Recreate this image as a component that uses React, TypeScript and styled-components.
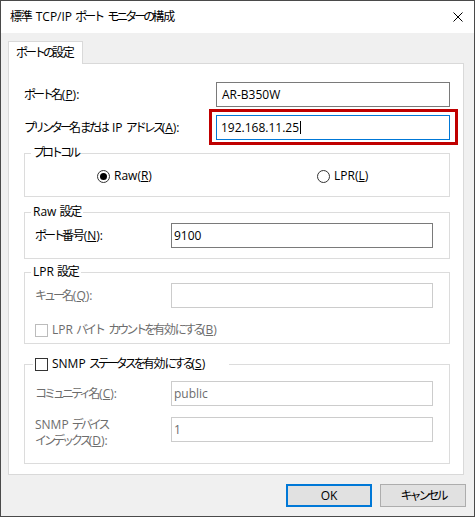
import React from "react";
import styled, { createGlobalStyle } from "styled-components";

const GlobalStyle = createGlobalStyle`
  html, body {
    margin: 0;
    padding: 0;
    background: #ffffff;
  }
  body {
    font-family: "Open Sans", "Noto Sans CJK JP", sans-serif;
    font-size: 12px;
    color: #000000;
  }
  * {
    box-sizing: border-box;
  }
`;

// The Windows UI font has narrow kana, so Japanese runs get tighter tracking
const KanaRun = styled.span<{ $spaced?: boolean }>`
  letter-spacing: -3px;
  margin-right: ${(p) => (p.$spaced ? 2 : 0)}px;
`;

const KanjiRun = styled.span<{ $spaced?: boolean }>`
  letter-spacing: -1.2px;
  margin-right: ${(p) => (p.$spaced ? 1 : 0)}px;
`;

const KANA = /[\u3040-\u30ff]/;
const KANJI = /[\u4e00-\u9fff]/;

const Jp = ({ text }: { text: string }) => {
  const parts = text.split(/([\u3040-\u30ff]+|[\u4e00-\u9fff]+)/).filter(Boolean);
  return (
    <>
      {parts.map((s, i) => {
        // keep the word space visible after a tightened run
        const spaced = (parts[i + 1] ?? "").startsWith(" ");
        if (KANA.test(s)) {
          return (
            <KanaRun key={i} $spaced={spaced}>
              {s}
            </KanaRun>
          );
        }
        if (KANJI.test(s)) {
          return (
            <KanjiRun key={i} $spaced={spaced}>
              {s}
            </KanjiRun>
          );
        }
        return <React.Fragment key={i}>{s}</React.Fragment>;
      })}
    </>
  );
};

// label text with an underlined access key, e.g. ポート名(P):
const Caption = ({ text, accel, colon }: { text: string; accel?: string; colon?: boolean }) => (
  <>
    <Jp text={text} />
    {accel && (
      <>
        (<u>{accel}</u>)
      </>
    )}
    {colon && ":"}
  </>
);

const Window = styled.div`
  width: 475px;
  height: 517px;
  border: 1px solid #4a4a4a;
  display: flex;
  flex-direction: column;
  background: #f0f0f0;
`;

const TitleBar = styled.div`
  flex: none;
  height: 32px;
  background: #ffffff;
  display: flex;
  align-items: center;
  justify-content: space-between;
  padding: 0 11px 0 9px;
`;

const Title = styled.span`
  line-height: 16px;
  white-space: nowrap;
`;

const Body = styled.div`
  flex: 1;
  padding: 8px 8px 0 7px;
  display: flex;
  flex-direction: column;
`;

const TabStrip = styled.div`
  display: flex;
`;

const Tab = styled.div`
  position: relative;
  z-index: 1;
  min-width: 75px;
  height: 23px;
  margin-bottom: -1px;
  padding: 3px 7px 0 7px;
  line-height: 16px;
  white-space: nowrap;
  background: #ffffff;
  border: 1px solid #d9d9d9;
  border-bottom: none;
`;

const Panel = styled.div`
  width: 456px;
  height: 412px;
  background: #ffffff;
  border: 1px solid #d9d9d9;
  padding: 18px 13px 0 15px;
  display: flex;
  flex-direction: column;
`;

const FormRow = styled.div<{ $mt?: number }>`
  display: grid;
  grid-template-columns: 192px 234px;
  align-items: center;
  margin-top: ${(p) => p.$mt ?? 0}px;
`;

const Label = styled.span<{ $disabled?: boolean }>`
  line-height: 16px;
  white-space: nowrap;
  color: ${(p) => (p.$disabled ? "#6d6d6d" : "#000000")};
`;

const TwoLineLabel = styled(Label)`
  line-height: 16px;
`;

type BoxState = "normal" | "focused" | "disabled";

const boxBorder: Record<BoxState, string> = {
  normal: "#7a7a7a",
  focused: "#0078d7",
  disabled: "#cccccc",
};

const TextBox = styled.div<{ $state?: BoxState; $pad?: number }>`
  position: relative;
  height: 25px;
  display: flex;
  align-items: center;
  padding: 0 ${(p) => p.$pad ?? 2}px;
  background: #ffffff;
  border: 1px solid ${(p) => boxBorder[p.$state ?? "normal"]};
  color: ${(p) => (p.$state === "disabled" ? "#6d6d6d" : "#000000")};
  line-height: 16px;
  white-space: nowrap;
`;

const Highlighted = styled(TextBox)`
  &::after {
    content: "";
    position: absolute;
    left: -8px;
    right: -9px;
    top: -7px;
    bottom: -6px;
    border: 3px solid #c00000;
    pointer-events: none;
  }
`;

const Caret = styled.span`
  display: inline-block;
  width: 1px;
  height: 13px;
  margin-left: 1px;
  background: #000000;
`;

const Group = styled.fieldset<{ $mt: number; $pt: number; $pb: number }>`
  width: 426px;
  min-width: 0;
  margin: ${(p) => p.$mt}px 0 0;
  padding: ${(p) => p.$pt}px 0 ${(p) => p.$pb}px 0;
  border: 1px solid #dcdcdc;
`;

const GroupBody = styled.div`
  padding: 0 15px 0 10px;
`;

const Legend = styled.legend<{ $indent?: number; $tail?: number }>`
  margin-left: ${(p) => p.$indent ?? 6}px;
  padding: 0 ${(p) => p.$tail ?? 2}px 0 2px;
  line-height: 16px;
  height: 16px;
  display: flex;
  align-items: center;
  gap: 4px;
  white-space: nowrap;
`;

const GroupRow = styled.div<{ $mt?: number; $top?: boolean }>`
  display: grid;
  grid-template-columns: 136px 262px;
  align-items: ${(p) => (p.$top ? "start" : "center")};
  margin-top: ${(p) => p.$mt ?? 0}px;
`;

const RadioRow = styled.div`
  display: grid;
  grid-template-columns: 220px auto;
  padding-left: 62px;
  height: 16px;
  align-items: center;
`;

const Choice = styled.label<{ $disabled?: boolean; $mt?: number }>`
  display: flex;
  align-items: center;
  gap: 4px;
  height: 16px;
  line-height: 16px;
  white-space: nowrap;
  margin-top: ${(p) => p.$mt ?? 0}px;
  color: ${(p) => (p.$disabled ? "#6d6d6d" : "#000000")};
`;

const RadioCircle = styled.span<{ $checked?: boolean }>`
  width: 13px;
  height: 13px;
  border-radius: 50%;
  border: 1px solid #333333;
  background: #ffffff;
  display: flex;
  align-items: center;
  justify-content: center;

  &::after {
    content: "";
    width: 7px;
    height: 7px;
    border-radius: 50%;
    background: ${(p) => (p.$checked ? "#000000" : "transparent")};
  }
`;

const CheckBox = styled.span<{ $disabled?: boolean }>`
  flex: none;
  width: 13px;
  height: 13px;
  border: 1px solid ${(p) => (p.$disabled ? "#bcbcbc" : "#333333")};
  background: #ffffff;
`;

const ButtonRow = styled.div`
  display: flex;
  justify-content: flex-end;
  gap: 8px;
  margin-top: 9px;
`;

const Button = styled.button<{ $primary?: boolean }>`
  width: 86px;
  height: 23px;
  padding: 0;
  font: inherit;
  line-height: 16px;
  color: #000000;
  background: #e1e1e1;
  border: ${(p) => (p.$primary ? "2px solid #0078d7" : "1px solid #adadad")};
`;

const CloseIcon = () => (
  <svg width="10" height="10" viewBox="0 0 10 10">
    <path d="M0.5 0.5 L9.5 9.5 M9.5 0.5 L0.5 9.5" stroke="#000" strokeWidth="1" fill="none" />
  </svg>
);

const App = () => {
  return (
    <>
      <GlobalStyle />
      <Window>
        <TitleBar>
          <Title>
            <Jp text="標準 TCP/IP ポート モニターの構成" />
          </Title>
          <CloseIcon />
        </TitleBar>
        <Body>
          <TabStrip>
            <Tab>
              <Jp text="ポートの設定" />
            </Tab>
          </TabStrip>
          <Panel>
            <FormRow>
              <Label>
                <Caption text="ポート名" accel="P" colon />
              </Label>
              <TextBox $pad={5}>AR-B350W</TextBox>
            </FormRow>
            <FormRow $mt={8}>
              <Label>
                <Caption text="プリンター名または IP アドレス" accel="A" colon />
              </Label>
              <Highlighted $state="focused" $pad={4}>
                192.168.11.25
                <Caret />
              </Highlighted>
            </FormRow>

            <Group $mt={5} $pt={7} $pb={12}>
              <Legend>
                <span>
                  <Jp text="プロトコル" />
                </span>
              </Legend>
              <GroupBody>
                <RadioRow>
                  <Choice>
                    <RadioCircle $checked />
                    <span>
                      <Caption text="Raw" accel="R" />
                    </span>
                  </Choice>
                  <Choice>
                    <RadioCircle />
                    <span>
                      <Caption text="LPR" accel="L" />
                    </span>
                  </Choice>
                </RadioRow>
              </GroupBody>
            </Group>

            <Group $mt={7} $pt={3} $pb={10}>
              <Legend>
                <span>
                  <Jp text="Raw 設定" />
                </span>
              </Legend>
              <GroupBody>
                <GroupRow>
                  <Label>
                    <Caption text="ポート番号" accel="N" colon />
                  </Label>
                  <TextBox>9100</TextBox>
                </GroupRow>
              </GroupBody>
            </Group>

            <Group $mt={5} $pt={3} $pb={5}>
              <Legend>
                <span>
                  <Jp text="LPR 設定" />
                </span>
              </Legend>
              <GroupBody>
                <GroupRow>
                  <Label $disabled>
                    <Caption text="キュー名" accel="Q" colon />
                  </Label>
                  <TextBox $state="disabled" />
                </GroupRow>
                <Choice $disabled $mt={14}>
                  <CheckBox $disabled />
                  <span>
                    <Caption text="LPR バイト カウントを有効にする" accel="B" />
                  </span>
                </Choice>
              </GroupBody>
            </Group>

            <Group $mt={12} $pt={9} $pb={14}>
              <Legend $indent={8} $tail={24}>
                <CheckBox />
                <span>
                  <Caption text="SNMP ステータスを有効にする" accel="S" />
                </span>
              </Legend>
              <GroupBody>
                <GroupRow>
                  <Label $disabled>
                    <Caption text="コミュニティ名" accel="C" colon />
                  </Label>
                  <TextBox $state="disabled">public</TextBox>
                </GroupRow>
                <GroupRow $mt={11} $top>
                  <TwoLineLabel $disabled>
                    <Jp text="SNMP デバイス" />
                    <br />
                    <Caption text="インデックス" accel="D" colon />
                  </TwoLineLabel>
                  <TextBox $state="disabled">1</TextBox>
                </GroupRow>
              </GroupBody>
            </Group>
          </Panel>
          <ButtonRow>
            <Button $primary>OK</Button>
            <Button>
              <Jp text="キャンセル" />
            </Button>
          </ButtonRow>
        </Body>
      </Window>
    </>
  );
};

export default App;
